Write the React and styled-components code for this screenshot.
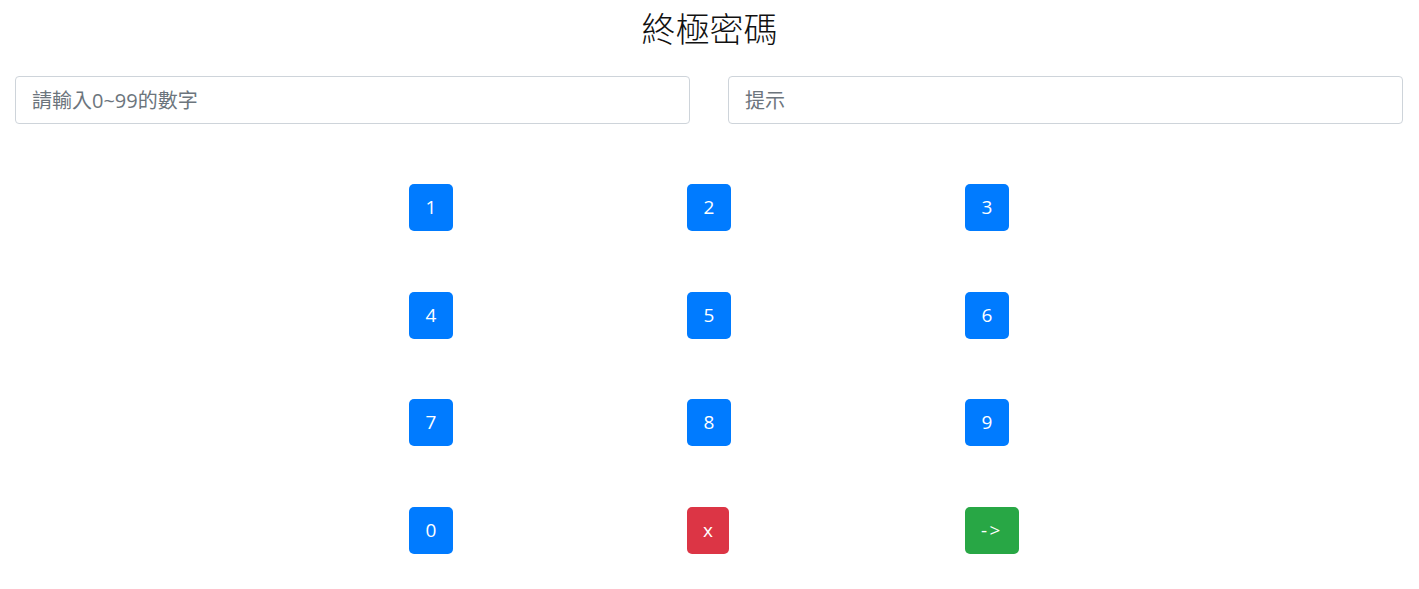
import React from "react";
import styled, { createGlobalStyle } from "styled-components";

const GlobalStyle = createGlobalStyle`
  body {
    margin: 0;
    background: #fff;
    font-family: "Open Sans", "Noto Sans CJK TC", sans-serif;
    color: #212529;
  }
`;

const Page = styled.div`
  display: flex;
  flex-direction: column;
`;

const Title = styled.h1`
  margin: 0;
  height: 56px;
  line-height: 56px;
  text-align: center;
  font-family: "Noto Sans CJK TC", serif;
  font-size: 34px;
  font-weight: 300;
  color: #111;
`;

const Fields = styled.div`
  display: grid;
  grid-template-columns: 675px 675px;
  column-gap: 38px;
  padding: 0 16px 0 15px;
  margin-top: 20px;
`;

const Input = styled.input`
  box-sizing: border-box;
  height: 48px;
  width: 100%;
  padding: 0 16px;
  border: 1px solid #ced4da;
  border-radius: 4px;
  font-family: "Open Sans", "Noto Sans CJK TC", sans-serif;
  font-size: 20px;
  color: #495057;
  outline: none;

  &::placeholder {
    color: #6c757d;
  }
`;

const Keypad = styled.div`
  display: grid;
  grid-template-columns: repeat(3, 278px);
  grid-auto-rows: 47px;
  row-gap: 60.5px;
  padding-left: 409px;
  margin-top: 60px;
`;

const colors = {
  primary: "#007bff",
  danger: "#dc3545",
  success: "#28a745",
};

const Key = styled.button`
  justify-self: start;
  height: 47px;
  min-width: ${(p) => (p.$variant ? "42px" : "44px")};
  padding: 0 16px;
  border: none;
  border-radius: 5px;
  background: ${(p) => colors[p.$variant || "primary"]};
  color: #fff;
  font-family: "Open Sans", sans-serif;
  font-size: 19px;
  line-height: 47px;
  letter-spacing: ${(p) => (p.$spaced ? "2.5px" : "0")};
  cursor: pointer;
`;

const keys = [
  { label: "1" },
  { label: "2" },
  { label: "3" },
  { label: "4" },
  { label: "5" },
  { label: "6" },
  { label: "7" },
  { label: "8" },
  { label: "9" },
  { label: "0" },
  { label: "x", variant: "danger" },
  { label: "->", variant: "success", spaced: true },
];

export default function App() {
  return (
    <>
      <GlobalStyle />
      <Page>
        <Title>終極密碼</Title>
        <Fields>
          <Input placeholder="請輸入0~99的數字" />
          <Input placeholder="提示" readOnly />
        </Fields>
        <Keypad>
          {keys.map((k) => (
            <Key key={k.label} $variant={k.variant} $spaced={k.spaced}>
              {k.label}
            </Key>
          ))}
        </Keypad>
      </Page>
    </>
  );
}
